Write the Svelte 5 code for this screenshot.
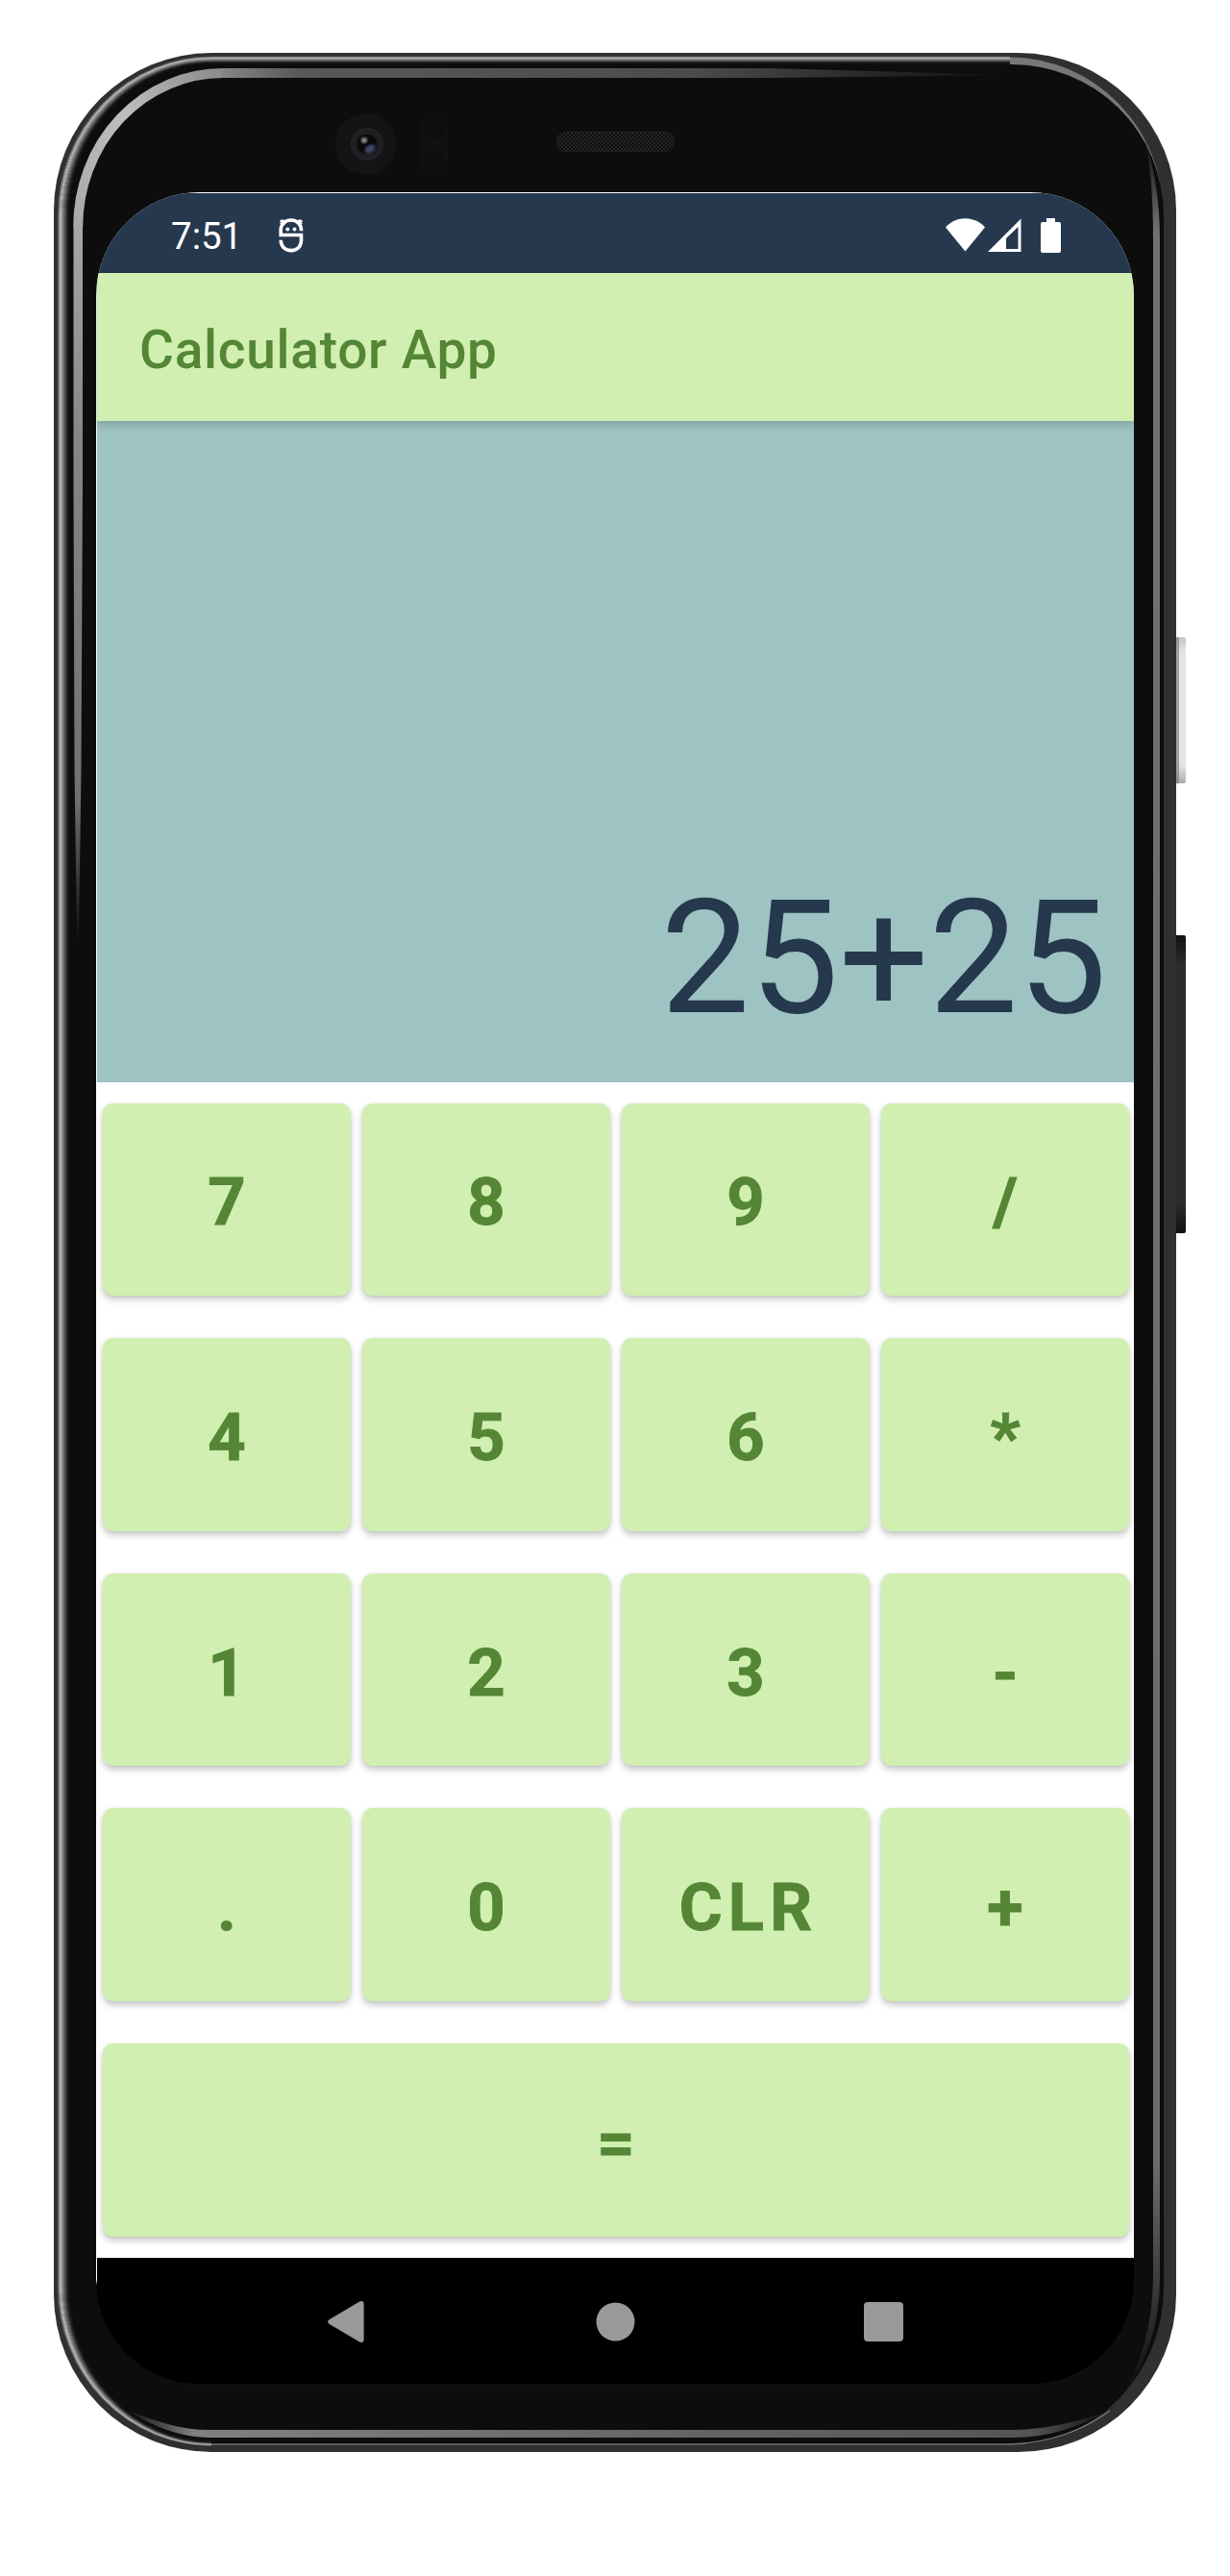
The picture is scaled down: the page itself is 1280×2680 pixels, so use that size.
<script>
  const rows = [
    ['7', '8', '9', '/'],
    ['4', '5', '6', '*'],
    ['1', '2', '3', '-'],
    ['.', '0', 'CLR', '+'],
    ['='],
  ];
  const expression = '25+25';

  // Shades of the outer metal bevel, from the edge inwards, about one pixel each.
  const bevel = ['#585858', '#808080', '#acacac', '#b4b4b4', '#9a9a9a', '#848484', '#6e6e6e', '#5a5a5a', '#464646', '#323232', '#202020', '#141415'];

  // One bevel line: along the top, down the left side and round the bottom-left corner.
  function bevelPath(i) {
    const d = i + 0.5;
    const rx = 160 - d;
    const top = 165 - d * 0.6;
    const bottom = 164 - d * 0.35;
    return `M1051 ${224 - top}H220A${rx} ${top} 0 0 0 ${60 + d} 224V2380A${rx} ${bottom} 0 0 0 220 ${2380 + bottom}`;
  }
</script>

<main class="stage">
  <div class="phone">
    <svg class="shell" viewBox="0 0 1280 2680" aria-hidden="true">
      <defs>
        <linearGradient id="volume" x1="0" y1="0" x2="0" y2="1">
          <stop offset="0" stop-color="#c4c4c4" />
          <stop offset=".1" stop-color="#e4e4e4" />
          <stop offset=".88" stop-color="#e4e4e4" />
          <stop offset="1" stop-color="#aaa" />
        </linearGradient>
        <linearGradient id="power" x1="0" y1="0" x2="0" y2="1">
          <stop offset="0" stop-color="#111" />
          <stop offset=".1" stop-color="#2b2b2b" />
          <stop offset=".9" stop-color="#2b2b2b" />
          <stop offset="1" stop-color="#111" />
        </linearGradient>
        <linearGradient id="rimTop" gradientUnits="userSpaceOnUse" x1="220" y1="0" x2="1050" y2="0">
          <stop offset="0" stop-color="#8c8c8c" />
          <stop offset=".11" stop-color="#585858" />
          <stop offset=".6" stop-color="#4c4c4c" />
          <stop offset="1" stop-color="#0d0d0e" />
        </linearGradient>
        <linearGradient id="rimLeft" gradientUnits="userSpaceOnUse" x1="0" y1="230" x2="0" y2="980">
          <stop offset="0" stop-color="#a8a8a8" />
          <stop offset=".3" stop-color="#868686" />
          <stop offset=".8" stop-color="#707070" />
          <stop offset="1" stop-color="#0d0d0e" />
        </linearGradient>
        <linearGradient id="rimCorner" gradientUnits="userSpaceOnUse" x1="82" y1="236" x2="232" y2="76">
          <stop offset="0" stop-color="#a8a8a8" />
          <stop offset=".55" stop-color="#bebebe" />
          <stop offset="1" stop-color="#8c8c8c" />
        </linearGradient>
        <linearGradient id="rimBottom" gradientUnits="userSpaceOnUse" x1="130" y1="0" x2="1155" y2="0">
          <stop offset="0" stop-color="#0d0d0e" />
          <stop offset=".07" stop-color="#808080" />
          <stop offset=".6" stop-color="#646464" />
          <stop offset=".92" stop-color="#555" />
          <stop offset="1" stop-color="#0d0d0e" />
        </linearGradient>
        <linearGradient id="rimRight" gradientUnits="userSpaceOnUse" x1="0" y1="145" x2="0" y2="2490">
          <stop offset="0" stop-color="#0d0d0e" />
          <stop offset=".04" stop-color="#707070" />
          <stop offset=".9" stop-color="#6b6b6b" />
          <stop offset="1" stop-color="#0d0d0e" />
        </linearGradient>
        <radialGradient id="lens">
          <stop offset="0" stop-color="#08080a" />
          <stop offset=".58" stop-color="#0b0b0d" />
          <stop offset=".62" stop-color="#1c1c1f" />
          <stop offset="1" stop-color="#242427" />
        </radialGradient>
        <pattern id="mesh" width="4" height="4" patternUnits="userSpaceOnUse">
          <rect width="4" height="4" fill="#0e0e0f" />
          <rect width="2" height="2" fill="#252525" />
          <rect x="2" y="2" width="2" height="2" fill="#252525" />
        </pattern>
        <filter id="soft"><feGaussianBlur stdDeviation="1.3" /></filter>
      </defs>

      <!-- side buttons -->
      <rect x="1218" y="663" width="16" height="152" rx="2" fill="url(#volume)" />
      <rect x="1224" y="663" width="3" height="152" fill="#777" opacity=".6" />
      <rect x="1218" y="973" width="16" height="310" rx="2" fill="url(#power)" />

      <!-- body and bevels -->
      <rect x="56" y="55" width="1168" height="2496" rx="164" fill="#303030" />
      <rect x="60" y="60" width="1151" height="2484" rx="160" ry="164" fill="#0d0d0e" />
      {#each bevel as shade, i}
        <path d={bevelPath(i)} fill="none" stroke={shade} stroke-width="1.4" />
      {/each}
      <path d="M1051 59.500A160 164.500 0 0 1 1211 224A158 157 0 0 0 1051 67Z" fill="#777" />
      <path d="M220 2543H1051Q1110 2541 1155 2508" fill="none" stroke="#777" stroke-width="1.500" />

      <path d="M76.500 235H86V500L84.500 800L82 975H80L77.500 800L76.500 500Z" fill="url(#rimLeft)" />
      <path d="M81.200 236A151 160 0 0 1 232 76" fill="none" stroke="url(#rimCorner)" stroke-width="10" />
      <path d="M231 71H800L1050 78L800 81H231Z" fill="url(#rimTop)" />
      <path d="M130 2506Q180 2528 216 2528H1055Q1105 2527 1155 2507Q1105 2536 1055 2536H216Q174 2535 130 2506Z" fill="url(#rimBottom)" />
      <path d="M1191 145Q1200 180 1200 250V2370Q1199 2440 1168 2492Q1207 2440 1207 2370V250Q1207 190 1191 145Z" fill="url(#rimRight)" />

      <!-- camera, sensors, speaker -->
      <circle cx="381" cy="150" r="32" fill="#141414" />
      <circle cx="382" cy="150" r="17" fill="url(#lens)" />
      <ellipse cx="385" cy="155" rx="6" ry="4" fill="#3c4468" transform="rotate(-35 385 155)" filter="url(#soft)" />
      <circle cx="379" cy="146" r="3" fill="#8c8c8c" filter="url(#soft)" />
      <rect x="438" y="120" width="28" height="62" rx="14" fill="#111112" />
      <circle cx="452" cy="134" r="11" fill="#0e0e0e" />
      <circle cx="452" cy="168" r="11" fill="#0e0e0e" />
      <rect x="579.500" y="137.500" width="122" height="20" rx="9" fill="url(#mesh)" stroke="#202020" />
    </svg>

    <div class="screen">
      <div class="status">
        <span class="clock">7:51</span>
        <svg class="debug" viewBox="0 0 26 36" fill="none" stroke="#fff" stroke-width="3.600">
          <path d="M23.500 13.200V12A10.500 9.800 0 0 0 2.200 12V17.500H23.500V23C23.500 29.500 19 33.600 13 33.600S2.200 29.500 2.200 22.800" />
          <path d="M1.800 2.200L6.500 6.500M5.500 1.800L2 6M24.200 2.200L19.500 6.500M20.500 1.800L24 6" stroke-width="2.600" />
          <circle cx="9.300" cy="11.500" r="2" fill="#fff" stroke="none" />
          <circle cx="16.500" cy="11.500" r="2" fill="#fff" stroke="none" />
        </svg>
        <svg class="signals" viewBox="0 0 120 36" fill="#fff">
          <path d="M0 9.500C11-2.700 30-2.700 41 9.500L20.500 34.500Z" />
          <path fill-rule="evenodd" d="M44 35L78.500 0.500V35ZM63 21V32H75.500V9Z" />
          <path d="M105 0h9v4h4a2 2 0 0 1 2 2v28a2 2 0 0 1-2 2h-17a2 2 0 0 1-2-2V6a2 2 0 0 1 2-2h4z" />
        </svg>
      </div>
      <header class="appbar">Calculator App</header>
      <div class="display">{expression}</div>
      <div class="keypad">
        {#each rows as row}
          <div class="row">
            {#each row as key}
              <button class="key"><span>{key}</span></button>
            {/each}
          </div>
        {/each}
      </div>
      <nav class="navbar">
        <svg viewBox="0 0 40 46"><path d="M2 20.500L34 1.500Q38.500 0 38.500 4V42Q38.500 46 34 44.500L2 25.500Q-1.500 23 2 20.500Z" /></svg>
        <svg viewBox="0 0 40 40"><circle cx="20" cy="20" r="19.500" /></svg>
        <svg viewBox="0 0 41 41"><rect width="41" height="41" rx="4" /></svg>
      </nav>
    </div>
  </div>
</main>

<style>
  :global(body) {
    margin: 0;
    background: #fff;
  }
  .stage {
    width: 1280px;
    height: 2680px;
    overflow: hidden;
    font-family: Roboto, sans-serif;
  }
  .phone {
    position: relative;
    box-sizing: border-box;
    width: 1280px;
    height: 2680px;
    padding: 200px 100px;
  }
  .shell {
    position: absolute;
    inset: 0;
    width: 1280px;
    height: 2680px;
  }
  .screen {
    position: relative;
    box-sizing: border-box;
    display: flex;
    flex-direction: column;
    width: 1080px;
    height: 2280px;
    padding: 1px 0 0 1px;
    border-radius: 108px;
    overflow: hidden;
    background: linear-gradient(#fff 2172px, #000 2178px);
  }
  .status {
    display: flex;
    align-items: center;
    box-sizing: border-box;
    height: 83px;
    padding: 5px 76px 0 77px;
    background: #26384d;
    color: #fff;
  }
  .clock {
    font-size: 38.5px;
    line-height: 45px;
    width: 112px;
  }
  .debug {
    width: 26px;
    height: 36px;
  }
  .signals {
    width: 120px;
    height: 36px;
    margin-left: auto;
  }
  .appbar {
    position: relative;
    z-index: 1;
    box-sizing: border-box;
    height: 154px;
    padding: 2px 0 0 44px;
    line-height: 156px;
    font-size: 55px;
    font-weight: 500;
    letter-spacing: 0.0135em;
    color: #548635;
    background: #d0efb1;
    box-shadow: 0 3px 10px rgba(0, 0, 0, 0.2);
  }
  .display {
    display: flex;
    align-items: flex-end;
    justify-content: flex-end;
    box-sizing: border-box;
    height: 688px;
    padding: 0 28px 33px 0;
    font-size: 165px;
    line-height: 193px;
    color: #26384d;
    background: #9dc3c2;
  }
  .keypad {
    display: flex;
    flex-direction: column;
    gap: 44px;
    box-sizing: border-box;
    height: 1223px;
    padding: 21.6px 5px 22.4px 6px;
    background: #fff;
  }
  .row {
    display: flex;
    flex: 1;
    gap: 12px;
  }
  .key {
    display: flex;
    align-items: center;
    justify-content: center;
    flex: 1 1 0;
    min-width: 0;
    border: 0;
    padding: 7px 0 0;
    border-radius: 11px;
    background: #d0efb1;
    box-shadow: 0 4px 7px rgba(0, 0, 0, 0.22), 0 0 4px rgba(0, 0, 0, 0.06);
    color: #548635;
    font: 700 68.75px/80px Roboto, sans-serif;
    letter-spacing: 0.0893em;
    -webkit-text-stroke: 0.9px #548635;
  }
  .key span {
    margin-right: -0.0893em;
  }
  .navbar {
    display: flex;
    align-items: center;
    justify-content: space-between;
    flex: 1;
    padding: 2px 240px 0 239px;
    background: #000;
  }
  .navbar svg {
    width: 41px;
    height: 45px;
    fill: #999;
  }
</style>
